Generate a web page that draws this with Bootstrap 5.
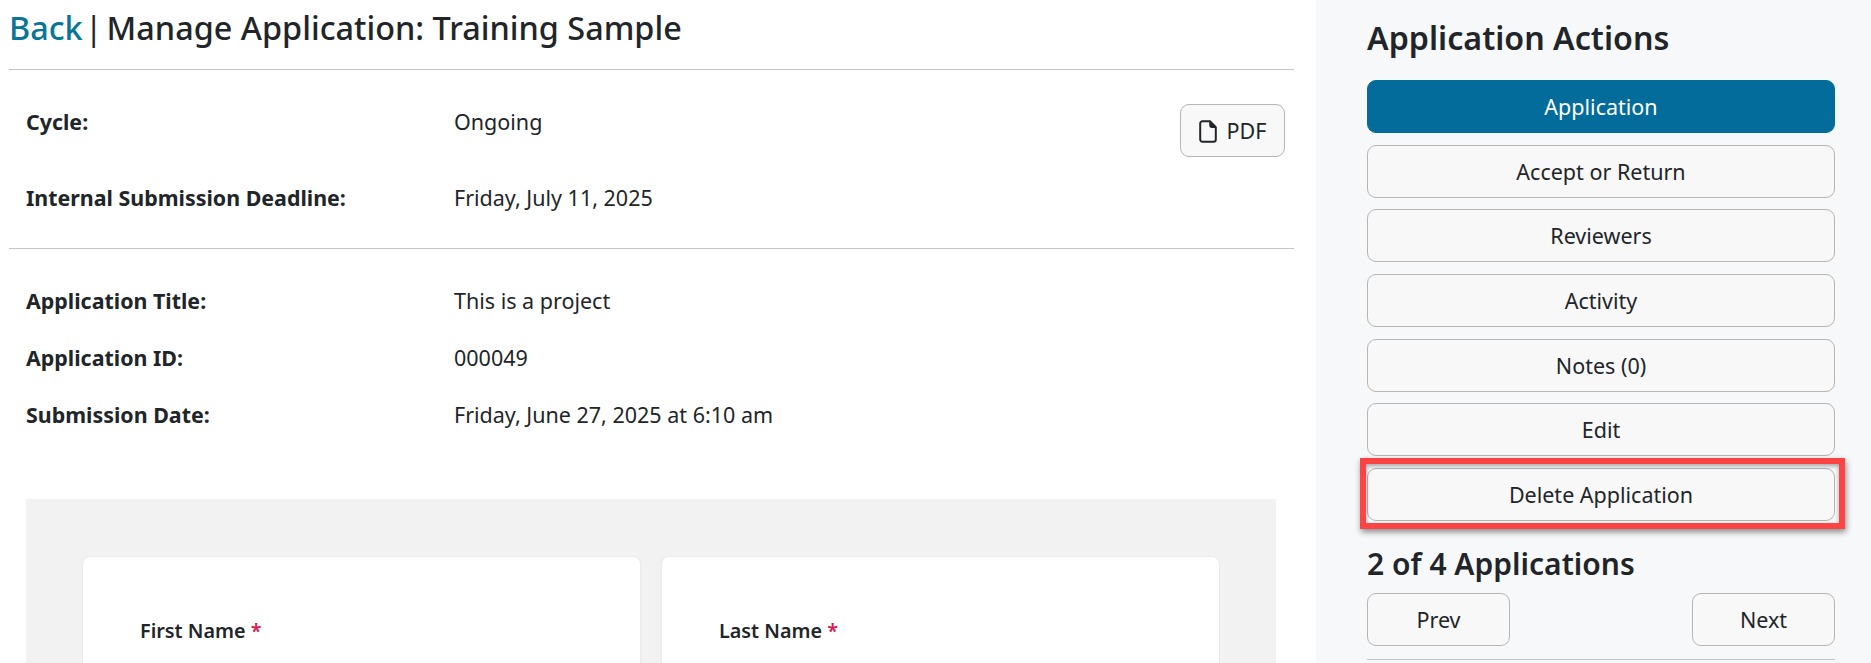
<!DOCTYPE html>
<html lang="en">
<head>
  <meta charset="UTF-8" />
  <meta name="viewport" content="width=device-width, initial-scale=1.0"/>
  <title>Manage Application</title>
  <link href="https://cdn.jsdelivr.net/npm/bootstrap@5.3.0/dist/css/bootstrap.min.css" rel="stylesheet"/>
  <style>
    body {
      font-family: "Noto Sans", sans-serif;
      font-size: 21.5px;
      color: #212529;
      height: 100vh;
      overflow: hidden;
    }
    .page-shell { height: 663px; overflow: hidden; }
    .main-pane { width: 1316px; padding: 0 22px 0 9px; flex: none; }
    .side-pane { flex: 1; background: #f7f8fa; padding: 19px 36px 0 51px; }

    .page-title { font-size: 32.4px; font-weight: 500; line-height: 38px; margin: 8px 0 23px; }
    .page-title a { color: #0a7596; text-decoration: none; }
    .title-sep { margin: 0 4px 0 2px; font-weight: 400; }
    .rule { height: 1px; background: #c4c4c4; }

    .info-row { display: flex; align-items: center; height: 26px; }
    .info-label { width: 445px; padding-left: 17px; font-weight: 700; font-size: 21.4px; flex: none; }
    .info-block { position: relative; }
    .info-top { padding: 39px 0 37px; }
    .info-top .info-row + .info-row { margin-top: 50px; }
    .info-app { padding: 39px 0 0; }
    .info-app .info-row + .info-row { margin-top: 31px; }

    .btn-app {
      --bs-btn-bg: #f8f8f8;
      --bs-btn-border-color: #b5b5b5;
      --bs-btn-color: #212529;
      --bs-btn-hover-bg: #eee;
      --bs-btn-hover-border-color: #b5b5b5;
      --bs-btn-font-size: 21.5px;
      --bs-btn-border-radius: 9px;
      height: 53px;
      padding: 1px 12px 0;
      display: flex;
      align-items: center;
      justify-content: center;
    }
    .btn-active {
      --bs-btn-bg: #036c9b;
      --bs-btn-border-color: #036c9b;
      --bs-btn-color: #fff;
    }
    .btn-pdf { width: 105px; gap: 10px; flex: none; }
    .pdf-slot { position: absolute; top: 34px; right: 0; margin-right: 9px; }

    .form-band { margin: 71px 18px 0 17px; height: 400px; background: #f2f2f2; padding: 58px 57px 0; display: flex; gap: 22px; }
    .field-tile { flex: 1; background: #fff; border-radius: 7px; box-shadow: 0 0 3px rgba(0,0,0,.08); padding: 59px 57px; }
    .field-label { font-size: 19.8px; font-weight: 600; line-height: 30px; }
    .req { color: #e0144c; }

    .side-title { font-size: 32.2px; font-weight: 600; line-height: 38px; margin: 0 0 23px; }
    .side-count { font-size: 30px; font-weight: 600; line-height: 38px; margin: 24px 0 10px; }
    .action-stack { gap: 11.7px; }
    .nav-btn { width: 143px; }
    .hilite-wrap { position: relative; }
    .hilite {
      position: absolute;
      inset: -10px -10px -8px -7px;
      border: 6px solid #fd4444;
      box-shadow: 1px 3px 6px rgba(0,0,0,.45), inset 0 2px 4px rgba(0,0,0,.35);
      pointer-events: none;
    }
    .end-rule { margin-top: 13px; }
  </style>
</head>
<body>
  <div class="d-flex page-shell">
    <div class="main-pane">
      <h1 class="page-title"><a href="#">Back</a><span class="title-sep">|</span>Manage Application: Training Sample</h1>
      <div class="rule"></div>

      <div class="info-block info-top">
        <div class="info-row"><div class="info-label">Cycle:</div><div>Ongoing</div></div>
        <div class="info-row"><div class="info-label">Internal Submission Deadline:</div><div>Friday, July 11, 2025</div></div>
        <div class="pdf-slot">
          <button type="button" class="btn btn-app btn-pdf">
            <svg width="18" height="23" viewBox="0 0 18 23" fill="none" stroke="#212529" stroke-width="2" stroke-linejoin="round"><path d="M3.4 1.2H11l5.800 6v12.400a2.200 2.200 0 0 1-2.200 2.200H3.400a2.200 2.200 0 0 1-2.200-2.200V3.400a2.200 2.200 0 0 1 2.200-2.200z"/><path d="M11 1.200v4a2 2 0 0 0 2 2h3.800" stroke-width="1.500" fill="#212529"/></svg>
            PDF
          </button>
        </div>
      </div>
      <div class="rule"></div>

      <div class="info-block info-app">
        <div class="info-row"><div class="info-label">Application Title:</div><div>This is a project</div></div>
        <div class="info-row"><div class="info-label">Application ID:</div><div>000049</div></div>
        <div class="info-row"><div class="info-label">Submission Date:</div><div>Friday, June 27, 2025 at 6:10 am</div></div>
      </div>

      <div class="form-band">
        <div class="field-tile"><div class="field-label">First Name <span class="req">*</span></div></div>
        <div class="field-tile"><div class="field-label">Last Name <span class="req">*</span></div></div>
      </div>
    </div>

    <div class="side-pane">
      <h2 class="side-title">Application Actions</h2>
      <div class="d-flex flex-column action-stack">
        <button type="button" class="btn btn-app btn-active">Application</button>
        <button type="button" class="btn btn-app">Accept or Return</button>
        <button type="button" class="btn btn-app">Reviewers</button>
        <button type="button" class="btn btn-app">Activity</button>
        <button type="button" class="btn btn-app">Notes (0)</button>
        <button type="button" class="btn btn-app">Edit</button>
        <div class="hilite-wrap">
          <button type="button" class="btn btn-app w-100">Delete Application</button>
          <div class="hilite"></div>
        </div>
      </div>
      <h2 class="side-count">2 of 4 Applications</h2>
      <div class="d-flex justify-content-between">
        <button type="button" class="btn btn-app nav-btn">Prev</button>
        <button type="button" class="btn btn-app nav-btn">Next</button>
      </div>
      <div class="rule end-rule"></div>
    </div>
  </div>
  <script src="https://cdn.jsdelivr.net/npm/bootstrap@5.3.0/dist/js/bootstrap.bundle.min.js"></script>
</body>
</html>
